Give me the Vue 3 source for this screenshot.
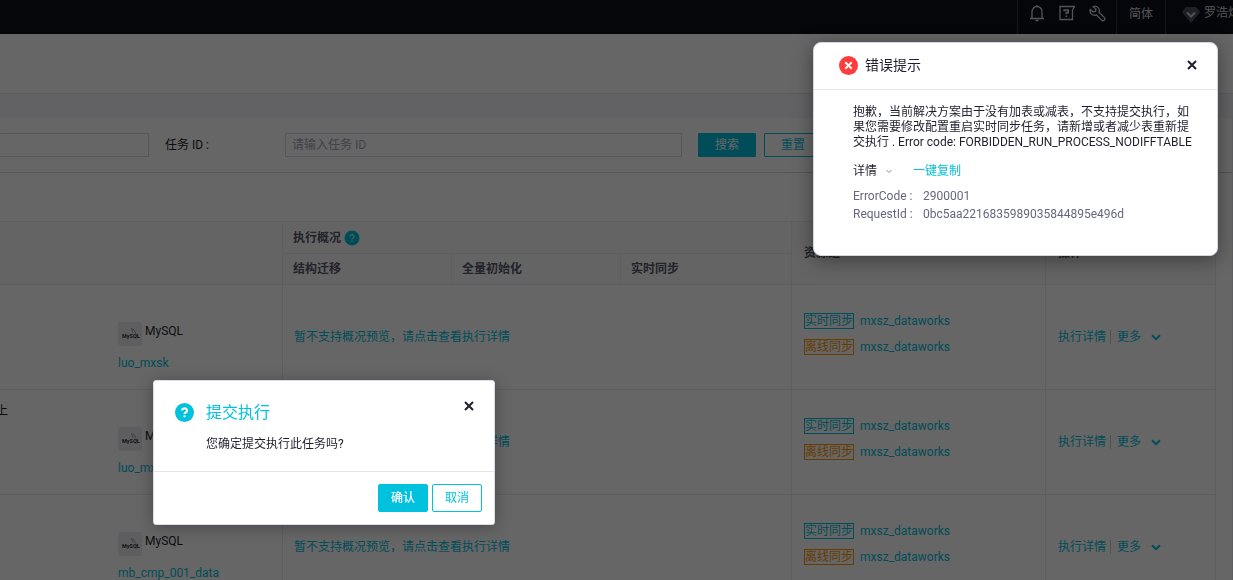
<script setup>
const rows = [
  { id: 1, status: '', source: 'luo_mxsk' },
  { id: 2, status: '上', source: 'luo_mxsk' },
  { id: 3, status: '', source: 'mb_cmp_001_data' },
]
const group = 'mxsz_dataworks'
</script>

<template>
  <div class="page">
    <header class="topbar">
      <nav class="tools">
        <button class="tool" aria-label="通知">
          <svg width="16" height="18" viewBox="0 0 16 18" fill="none" stroke="currentColor" stroke-width="1.3">
            <path d="M1 14.5h14M3 14.5V7.5a5 5 0 0 1 10 0v7M8 1v1.5M6.5 16.5h3" />
          </svg>
        </button>
        <button class="tool" aria-label="帮助">
          <svg width="16" height="16" viewBox="0 0 16 16" fill="none" stroke="currentColor" stroke-width="1.3">
            <path d="M13.500 5v9.500H1v-13h14.500L13.500 5" />
            <path d="M5.200 6.200V5h4v2.600H7.300v1.700M7.300 10.500v1.600" stroke-width="1.600" />
          </svg>
        </button>
        <button class="tool" aria-label="设置">
          <svg width="17" height="17" viewBox="0 0 17 17" fill="none" stroke="currentColor" stroke-width="1.3" stroke-linejoin="round">
            <path d="M4 1.500a4.500 4.500 0 0 1 6 5.800l5.300 5.200a1.600 1.600 0 0 1-2.600 2.600L7.400 9.900A4.500 4.500 0 0 1 1.300 4.300l2.800 2.600 2.400-.6.500-2.300z" />
          </svg>
        </button>
      </nav>
      <button class="lang">简体</button>
      <button class="user">
        <svg width="18" height="16" viewBox="0 0 18 16">
          <path d="M4 0h10l4 5-9 11L0 5z" fill="#4c4f66" />
          <path d="M5 5.500 9 9.500l4-4" fill="none" stroke="#c4c8d0" stroke-width="2" />
        </svg>
        <span>罗浩炜</span>
      </button>
    </header>

    <div class="titlebar"></div>

    <main class="content">
      <form class="filters" @submit.prevent>
        <input class="field first" type="text" aria-label="任务名称" />
        <label for="task-id">任务 ID :</label>
        <input id="task-id" class="field" type="text" placeholder="请输入任务 ID" />
        <button class="search" type="submit">搜索</button>
        <button class="reset" type="reset">重置</button>
      </form>

      <table class="tasks">
        <colgroup>
          <col class="c-status" /><col class="c-source" /><col class="c-step" /><col class="c-step" />
          <col /><col class="c-group" /><col class="c-ops" />
        </colgroup>
        <thead>
          <tr>
            <th rowspan="2" class="plain"></th>
            <th rowspan="2"></th>
            <th colspan="3">
              <span class="with-help">执行概况
                <svg width="16" height="16" viewBox="0 0 16 16">
                  <circle cx="8" cy="8" r="7.500" fill="#00c1de" />
                  <path d="M6 6.500a2 2 0 1 1 3 1.700q-1 .5-1 1.400M8 10.800v1.200" fill="none" stroke="#fff" stroke-width="1" />
                </svg>
              </span>
            </th>
            <th rowspan="2" class="wide">资源组</th>
            <th rowspan="2" class="wide">操作</th>
          </tr>
          <tr>
            <th>结构迁移</th>
            <th>全量初始化</th>
            <th>实时同步</th>
          </tr>
        </thead>
        <tbody>
          <tr v-for="row in rows" :key="row.id">
            <td class="status plain">{{ row.status }}</td>
            <td class="source">
              <div class="db">
                <svg width="24" height="24" viewBox="0 0 24 24">
                  <rect width="24" height="24" rx="2" fill="#ebecf0" />
                  <path d="M13.500 6.500q3 .3 4 4.500l2 2.500-2 .5M13.500 6.500l1.500 4" fill="none" stroke="#8c8f98" stroke-width=".8" />
                  <text x="4" y="16" font-size="5.500" font-weight="700" font-family="Roboto, sans-serif" fill="#333">MySQL</text>
                </svg>
                <span>MySQL</span>
              </div>
              <a href="#">{{ row.source }}</a>
            </td>
            <td colspan="3" class="preview"><a href="#">暂不支持概况预览，请点击查看执行详情</a></td>
            <td class="wide group">
              <div class="res"><span class="tag live">实时同步</span><a href="#">{{ group }}</a></div>
              <div class="res"><span class="tag offline">离线同步</span><a href="#">{{ group }}</a></div>
            </td>
            <td class="wide">
              <div class="ops">
                <a href="#">执行详情</a>
                <button class="more">更多
                  <svg width="10" height="7" viewBox="0 0 10 7"><path d="M1 1.200 5 5.200l4-4" fill="none" stroke="currentColor" stroke-width="2" /></svg>
                </button>
              </div>
            </td>
          </tr>
        </tbody>
      </table>
    </main>

    <div class="mask"></div>

    <section class="confirm" role="dialog" aria-labelledby="confirm-title">
      <div class="confirm-body">
        <svg width="19" height="19" viewBox="0 0 19 19">
          <circle cx="9.500" cy="9.500" r="9.500" fill="#00c1de" />
          <path d="M7 7.600a2.500 2.200 0 1 1 3.700 1.900q-1.200.6-1.200 1.600M9.500 12.300v2" fill="none" stroke="#fff" stroke-width="2" />
        </svg>
        <div class="confirm-text">
          <h2 id="confirm-title">提交执行</h2>
          <p>您确定提交执行此任务吗?</p>
        </div>
        <button class="close" aria-label="关闭">
          <svg width="10" height="10" viewBox="0 0 10 10"><path d="m1 1 8 8M9 1 1 9" stroke="currentColor" stroke-width="2" /></svg>
        </button>
      </div>
      <footer>
        <button class="ok">确认</button>
        <button class="cancel">取消</button>
      </footer>
    </section>

    <section class="notice" role="alertdialog" aria-labelledby="notice-title">
      <header class="notice-head">
        <svg width="19" height="19" viewBox="0 0 19 19">
          <circle cx="9.500" cy="9.500" r="9.500" fill="#ff3b3b" />
          <path d="m6.300 6.300 6.400 6.400M12.700 6.300l-6.400 6.400" stroke="#fff" stroke-width="2" />
        </svg>
        <h2 id="notice-title">错误提示</h2>
        <button class="close" aria-label="关闭">
          <svg width="10" height="10" viewBox="0 0 10 10"><path d="m1 1 8 8M9 1 1 9" stroke="currentColor" stroke-width="2" /></svg>
        </button>
      </header>
      <div class="notice-body">
        <p>抱歉，当前解决方案由于没有加表或减表，不支持提交执行，如果您需要修改配置重启实时同步任务，请新增或者减少表重新提交执行 . Error code: FORBIDDEN_RUN_PROCESS_NODIFFTABLE</p>
        <div class="detail">
          <button class="toggle">详情
            <svg width="6" height="5" viewBox="0 0 6 5"><path d="m.5 1 2.500 2.500L5.500 1" fill="none" stroke="#8888a0" stroke-width="1" /></svg>
          </button>
          <button class="copy">一键复制</button>
        </div>
        <dl>
          <dt>ErrorCode :</dt><dd>2900001</dd>
          <dt>RequestId :</dt><dd>0bc5aa2216835989035844895e496d</dd>
        </dl>
      </div>
    </section>
  </div>
</template>

<style>
html,
body {
  overflow: hidden;
}
</style>

<style scoped>
.page {
  min-height: 100vh;
  background: #fff;
  color: #1f1f2e;
  font: 12px/18px Roboto, "Noto Sans CJK SC", sans-serif;
}
.page * {
  box-sizing: border-box;
}
button {
  padding: 0;
  border: 0;
  background: none;
  color: inherit;
  font: inherit;
  cursor: pointer;
}
a {
  color: #00c1de;
  text-decoration: none;
}
h2,
p,
dl,
dd {
  margin: 0;
}
svg {
  display: block;
  flex: none;
}

.topbar {
  display: flex;
  justify-content: flex-end;
  height: 34px;
  background: #0c0f1a;
  color: #d0d2d8;
}
.topbar > * {
  border-left: 1px solid #363a45;
  padding-bottom: 8px;
}
.tools {
  display: flex;
  align-items: center;
  gap: 14px;
  width: 99px;
  padding-left: 11px;
}
.topbar > .lang {
  width: 49px;
  padding-bottom: 6px;
}
.user {
  display: flex;
  align-items: center;
  gap: 4px;
  width: 68px;
  padding-left: 16px;
  overflow: hidden;
  white-space: nowrap;
}
.user svg {
  margin-top: 4px;
}

.titlebar {
  height: 60px;
  border-bottom: 1px solid #e3e4e8;
}
.content {
  border-top: 24px solid #f5f6fa;
  border-right: 1px solid #ebecf2;
}
.filters {
  display: flex;
  align-items: center;
  height: 55px;
  border-bottom: 1px solid #d4d4e2;
}
.filters label {
  width: 120px;
  margin-left: 16px;
}
.field {
  flex: 1;
  min-width: 0;
  height: 24px;
  padding: 0 6px;
  border: 1px solid #d4d4e2;
  border-radius: 1px;
  background: #fff;
  font: inherit;
}
.field::placeholder {
  color: #a2a2b4;
}
.field.first {
  flex: none;
  width: 149px;
  border-left: 0;
}
.search,
.reset {
  width: 58px;
  height: 24px;
  border: 1px solid #00c1de;
  border-radius: 1px;
  color: #00c1de;
}
.search {
  margin: 0 8px 0 16px;
  background: #00c1de;
  color: #fff;
}
.reset {
  margin-right: 410px;
}

.tasks {
  width: calc(100% - 16px);
  margin-top: 48px;
  border-collapse: separate;
  border-spacing: 0;
  border-top: 1px solid #ebecf2;
  table-layout: fixed;
}
.c-status { width: 108px; }
.c-source { width: 175px; }
.c-step { width: 169px; }
.c-group { width: 254px; }
.c-ops { width: 170px; }
th,
td {
  padding: 0 10px;
  border-right: 1px solid #ebecf2;
  border-bottom: 1px solid #ebecf2;
  text-align: left;
}
th {
  height: 31px;
  background: #fafafc;
  color: #55556b;
  font-weight: 700;
}
tr:first-child > th {
  height: 32px;
}
.plain {
  border-right: 0;
}
.wide {
  padding-left: 12px;
}
.with-help {
  display: flex;
  align-items: center;
  gap: 3px;
}
td {
  height: 105px;
}
.status {
  padding: 0 0 62px;
  text-indent: -4px;
}
.source {
  padding-top: 20px;
}
.db {
  display: flex;
  gap: 3px;
  margin-bottom: 8px;
}
.preview {
  padding-left: 11px;
}
.group {
  padding-bottom: 6px;
}
.res {
  display: flex;
  align-items: center;
  gap: 6px;
  height: 26px;
}
.tag {
  border: 1px solid;
  line-height: 14px;
}
.live {
  color: #00c1de;
}
.offline {
  color: #ff9800;
}
.ops {
  display: flex;
  align-items: center;
}
.more {
  display: flex;
  align-items: center;
  gap: 10px;
  height: 14px;
  margin-left: 4px;
  padding-left: 6px;
  border-left: 1px solid #c8c8d4;
  color: #00c1de;
}

.mask {
  position: fixed;
  inset: 0;
  background: rgba(0, 0, 0, 0.6);
}

.close {
  margin-left: auto;
  color: #1f1f2e;
}
.confirm {
  position: fixed;
  top: 380px;
  left: 153px;
  width: 342px;
  border: 1px solid #dcdce6;
  border-radius: 3px;
  background: #fff;
  box-shadow: 0 2px 16px rgba(0, 0, 0, 0.3);
}
.confirm-body {
  display: flex;
  align-items: flex-start;
  gap: 12px;
  padding: 20px 20px 18px 21px;
}
.confirm-body > svg {
  margin-top: 2px;
}
.confirm h2 {
  margin-bottom: 10px;
  color: #00c1de;
  font-size: 16px;
  font-weight: 400;
  line-height: 24px;
}
.confirm footer {
  display: flex;
  justify-content: flex-end;
  gap: 4px;
  padding: 12px;
  border-top: 1px solid #e3e4ee;
}
.ok,
.cancel {
  width: 50px;
  height: 28px;
  border: 1px solid #00c1de;
  border-radius: 2px;
  color: #00c1de;
}
.ok {
  background: #00c1de;
  color: #fff;
  font-weight: 500;
}

.notice {
  position: fixed;
  top: 42px;
  right: 15px;
  width: 405px;
  border: 1px solid #d4d4e2;
  border-radius: 8px;
  background: #fff;
  box-shadow: 0 4px 20px rgba(0, 0, 0, 0.4);
}
.notice-head {
  display: flex;
  align-items: center;
  gap: 7px;
  height: 47px;
  padding: 0 20px 2px 25px;
  border-bottom: 1px solid #e3e4ee;
}
.notice-head h2 {
  font-size: 14px;
  font-weight: 400;
  line-height: 20px;
}
.notice-body {
  padding: 15px 24px 32px 39px;
}
.notice-body p {
  line-height: 15px;
}
.detail {
  display: flex;
  gap: 21px;
  margin: 12px 0 7px;
}
.toggle {
  display: flex;
  align-items: center;
  gap: 9px;
}
.copy {
  color: #00c1de;
}
dl {
  display: grid;
  grid-template-columns: 60px 1fr;
  column-gap: 10px;
  color: #666680;
}
</style>
